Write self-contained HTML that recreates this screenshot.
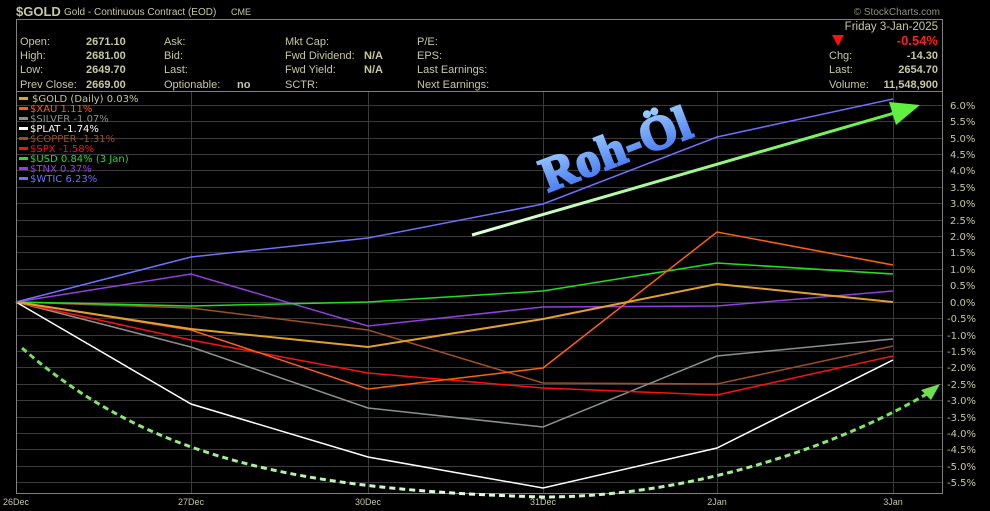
<!DOCTYPE html>
<html><head><meta charset="utf-8"><style>
body{margin:0;background:#000;width:990px;height:511px;overflow:hidden;font-family:"Liberation Sans",sans-serif}
svg{display:block}
</style></head><body>
<svg width="990" height="511" xmlns="http://www.w3.org/2000/svg" font-family="Liberation Sans, sans-serif">
<defs>
<linearGradient id="tg" x1="0" y1="0" x2="0" y2="1"><stop offset="0" stop-color="#9fd0ff"/><stop offset="1" stop-color="#3a6cf0"/></linearGradient>
<linearGradient id="ag" x1="0" y1="0" x2="1" y2="0"><stop offset="0" stop-color="#e0ffe0"/><stop offset="1" stop-color="#60f040"/></linearGradient>
<linearGradient id="dg" x1="0" y1="0" x2="1" y2="0"><stop offset="0" stop-color="#70e050"/><stop offset="0.5" stop-color="#e0ffe8"/><stop offset="1" stop-color="#70e050"/></linearGradient>
</defs>
<text x="16" y="16" font-size="13" font-weight="bold" fill="#c8c8a0">$GOLD</text>
<text x="64" y="15" font-size="10" fill="#c8c8a0">Gold - Continuous Contract (EOD)</text>
<text x="231" y="15" font-size="9" fill="#c8c8a0">CME</text>
<text x="940" y="15" font-size="10" fill="#909080" text-anchor="end">© StockCharts.com</text>
<rect x="16.5" y="19.5" width="926" height="72" fill="none" stroke="#808080"/>
<g font-size="11" fill="#c8c8a0">
<text x="20" y="45">Open:</text><text x="20" y="59">High:</text><text x="20" y="73">Low:</text><text x="20" y="88">Prev Close:</text>
<g font-weight="bold"><text x="86" y="45">2671.10</text><text x="86" y="59">2681.00</text><text x="86" y="73">2649.70</text><text x="86" y="88">2669.00</text></g>
<text x="164" y="45">Ask:</text><text x="164" y="59">Bid:</text><text x="164" y="73">Last:</text><text x="164" y="88">Optionable:</text><text x="237" y="88" font-weight="bold">no</text>
<text x="285" y="45">Mkt Cap:</text><text x="285" y="59">Fwd Dividend:</text><text x="285" y="73">Fwd Yield:</text><text x="285" y="88">SCTR:</text>
<text x="364" y="59" font-weight="bold">N/A</text><text x="364" y="73" font-weight="bold">N/A</text>
<text x="417" y="45">P/E:</text><text x="417" y="59">EPS:</text><text x="417" y="73">Last Earnings:</text><text x="417" y="88">Next Earnings:</text>
<text x="938" y="30" text-anchor="end" font-size="11.5">Friday  3-Jan-2025</text>
<text x="938" y="45" text-anchor="end" font-weight="bold" fill="#ff2020" font-size="13">-0.54%</text>
<text x="829" y="59">Chg:</text><text x="829" y="73">Last:</text><text x="829" y="88">Volume:</text>
<g font-weight="bold" text-anchor="end"><text x="938" y="59">-14.30</text><text x="938" y="73">2654.70</text><text x="938" y="88">11,548,900</text></g>
</g>
<polygon points="832,35 844,35 838,46" fill="#ff1010"/>
<!-- grid -->
<g stroke="#3a3a3a" stroke-width="1">
<line x1="16" y1="105.5" x2="943" y2="105.5"/><line x1="16" y1="121.5" x2="943" y2="121.5"/><line x1="16" y1="138.5" x2="943" y2="138.5"/><line x1="16" y1="154.5" x2="943" y2="154.5"/><line x1="16" y1="170.5" x2="943" y2="170.5"/><line x1="16" y1="187.5" x2="943" y2="187.5"/><line x1="16" y1="203.5" x2="943" y2="203.5"/><line x1="16" y1="220.5" x2="943" y2="220.5"/><line x1="16" y1="236.5" x2="943" y2="236.5"/><line x1="16" y1="252.5" x2="943" y2="252.5"/><line x1="16" y1="269.5" x2="943" y2="269.5"/><line x1="16" y1="285.5" x2="943" y2="285.5"/><line x1="16" y1="302.5" x2="943" y2="302.5"/><line x1="16" y1="318.5" x2="943" y2="318.5"/><line x1="16" y1="335.5" x2="943" y2="335.5"/><line x1="16" y1="351.5" x2="943" y2="351.5"/><line x1="16" y1="367.5" x2="943" y2="367.5"/><line x1="16" y1="384.5" x2="943" y2="384.5"/><line x1="16" y1="400.5" x2="943" y2="400.5"/><line x1="16" y1="417.5" x2="943" y2="417.5"/><line x1="16" y1="433.5" x2="943" y2="433.5"/><line x1="16" y1="449.5" x2="943" y2="449.5"/><line x1="16" y1="466.5" x2="943" y2="466.5"/><line x1="16" y1="482.5" x2="943" y2="482.5"/>
<line x1="191.5" y1="91" x2="191.5" y2="493"/><line x1="368.5" y1="91" x2="368.5" y2="493"/><line x1="543.5" y1="91" x2="543.5" y2="493"/><line x1="717.5" y1="91" x2="717.5" y2="493"/><line x1="893.5" y1="91" x2="893.5" y2="493"/>
</g>
<rect x="16.5" y="91.5" width="926" height="402" fill="none" stroke="#808080"/>
<g font-size="10" font-family="DejaVu Sans, sans-serif">
<rect x="19" y="97" width="9" height="3" fill="#e0a030"/><text x="32" y="102" fill="#c8c8a0">$GOLD (Daily) 0.03%</text>
<rect x="19" y="107" width="9" height="3" fill="#ff6010"/><text x="30" y="112" fill="#ff6010">$XAU 1.11%</text>
<rect x="19" y="117" width="9" height="3" fill="#8a9090"/><text x="30" y="122" fill="#8a9090">$SILVER -1.07%</text>
<rect x="19" y="127" width="9" height="3" fill="#fff"/><text x="30" y="132" fill="#fff">$PLAT -1.74%</text>
<rect x="19" y="137" width="9" height="3" fill="#a05020"/><text x="30" y="142" fill="#a05020">$COPPER -1.31%</text>
<rect x="19" y="147" width="9" height="3" fill="#ff1010"/><text x="30" y="152" fill="#ff1010">$SPX -1.58%</text>
<rect x="19" y="157" width="9" height="3" fill="#20e020"/><text x="30" y="162" fill="#20e020">$USD 0.84% (3 Jan)</text>
<rect x="19" y="167" width="9" height="3" fill="#9040e0"/><text x="30" y="172" fill="#9040e0">$TNX 0.37%</text>
<rect x="19" y="177" width="9" height="3" fill="#7070ff"/><text x="30" y="182" fill="#7070ff">$WTIC 6.23%</text>
</g>
<!-- axis labels -->
<g font-size="10" fill="#c8c8a0" font-family="DejaVu Sans, sans-serif">
<text x="950" y="109">6.0%</text><text x="950" y="125">5.5%</text><text x="950" y="142">5.0%</text><text x="950" y="158">4.5%</text><text x="950" y="174">4.0%</text><text x="950" y="191">3.5%</text><text x="950" y="207">3.0%</text><text x="950" y="224">2.5%</text><text x="950" y="240">2.0%</text><text x="950" y="256">1.5%</text><text x="950" y="273">1.0%</text><text x="950" y="289">0.5%</text><text x="950" y="306">0.0%</text><text x="947" y="322">-0.5%</text><text x="947" y="339">-1.0%</text><text x="947" y="355">-1.5%</text><text x="947" y="371">-2.0%</text><text x="947" y="388">-2.5%</text><text x="947" y="404">-3.0%</text><text x="947" y="421">-3.5%</text><text x="947" y="437">-4.0%</text><text x="947" y="453">-4.5%</text><text x="947" y="470">-5.0%</text><text x="947" y="486">-5.5%</text>
</g>
<g font-size="9" fill="#c8c8a0" text-anchor="middle">
<text x="16" y="505">26Dec</text><text x="191" y="505">27Dec</text><text x="368" y="505">30Dec</text><text x="543" y="505">31Dec</text><text x="717" y="505">2Jan</text><text x="893" y="505">3Jan</text>
</g>
<!-- series -->
<g fill="none" stroke-width="1.5">
<polyline stroke="#a05020" points="16,302 191,308 368,330 543,383 717,384 893,346"/>
<polyline stroke="#8a9090" points="16,302 191,347 368,408 543,427 717,356 893,339"/>
<polyline stroke="#ff1010" points="16,302 191,340 368,373 543,388 717,395 893,356"/>
<polyline stroke="#ffffff" points="16,302 191,404 368,457 543,488 717,448 893,360"/>
<polyline stroke="#9040e0" points="16,302 191,274 368,326 543,307 717,306 893,291"/>
<polyline stroke="#20e020" points="16,302 191,306 368,302 543,291 717,263 893,274"/>
<polyline stroke="#ff6010" points="16,302 191,330 368,389 543,368 717,232 893,265"/>
<polyline stroke="#e0a030" stroke-width="2" points="16,302 191,329 368,347 543,319 717,284 893,302"/>
<polyline stroke="#7070ff" points="16,302 191,257 368,238 543,204 717,137 893,99"/>
</g>
<!-- annotations -->
<line x1="472" y1="235" x2="898" y2="112" stroke="url(#ag)" stroke-width="3"/>
<polygon points="920,105 889,102 896,125" fill="#60f040"/>
<path d="M22,348 C150,460 300,490 543,497 C700,497 850,440 930,392" fill="none" stroke="url(#dg)" stroke-width="3" stroke-dasharray="6,4"/>
<polygon points="940,384 921,390 931,400" fill="#70e050"/>
<text x="0" y="0" transform="translate(548,192) rotate(-21)" font-family="Liberation Serif, serif" font-weight="bold" font-size="48" fill="url(#tg)" stroke="url(#tg)" stroke-width="2.5" letter-spacing="1">Roh-Öl</text>
</svg>
</body></html>
